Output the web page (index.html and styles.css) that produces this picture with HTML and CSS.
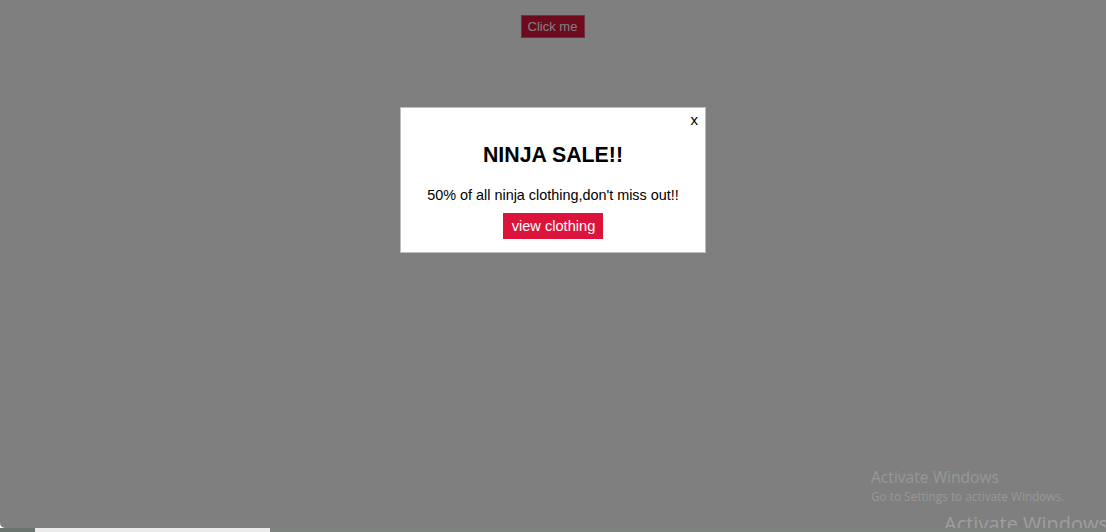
FILE: index.html
```html
<!DOCTYPE html>
<html>
<head>
<meta charset="utf-8">
<link rel="stylesheet" href="styles.css">
</head>
<body>
<div class="app">
  <div class="top">
    <button class="btn-open">Click me</button>
  </div>
  <div class="backdrop">
    <div class="popup">
      <span class="close">x</span>
      <h1 class="title">NINJA SALE!!</h1>
      <p class="text">50% of all ninja clothing,don't miss out!!</p>
      <button class="btn-view">view clothing</button>
    </div>
    <div class="watermark">
      <div class="wm-title">Activate Windows</div>
      <div class="wm-sub">Go to Settings to activate Windows.</div>
    </div>
    <div class="wm-big">Activate Windows</div>
  </div>
  <div class="bottombar">
    <span class="seg seg-a"></span><span class="seg seg-b"></span><span class="seg seg-c"></span>
  </div>
</div>
</body>
</html>
```

FILE: styles.css
```css
html, body {
  margin: 0;
  padding: 0;
  width: 1106px;
  height: 532px;
  overflow: hidden;
  background: #ffffff;
  font-family: "Liberation Sans", Arial, sans-serif;
}
.app {
  position: relative;
  width: 1106px;
  height: 532px;
}
.top {
  display: flex;
  justify-content: center;
  padding-top: 15px;
}
.btn-open {
  font-family: "Liberation Sans", Arial, sans-serif;
  font-size: 13px;
  background: #dc143c;
  color: #ffffff;
  border: 1px solid #e8607a;
  height: 23px;
  width: 64px;
  padding: 0;
  margin-left: -1px;
}
.backdrop {
  position: absolute;
  left: 0;
  top: 0;
  width: 1106px;
  height: 528px;
  background: rgba(0, 0, 0, 0.5);
  border-bottom-left-radius: 5px;
  display: flex;
  flex-direction: column;
  align-items: center;
}
.popup {
  position: relative;
  box-sizing: border-box;
  width: 306px;
  margin-top: 107px;
  height: 146px;
  background: #ffffff;
  border: 1px solid #bdbdbd;
  display: flex;
  flex-direction: column;
  align-items: center;
  padding-top: 35px;
}
.close {
  position: absolute;
  right: 7px;
  top: 3px;
  font-size: 15px;
  color: #000;
}
.title {
  margin: 0;
  font-size: 21.3px;
  font-weight: bold;
  line-height: 24px;
  color: #000;
}
.text {
  margin: 19px 0 0;
  font-size: 14.4px;
  line-height: 18px;
  color: #000;
}
.btn-view {
  margin-top: 9px;
  font-family: "Liberation Sans", Arial, sans-serif;
  font-size: 14.6px;
  background: #dc143c;
  color: #ffffff;
  border: none;
  height: 26px;
  padding: 0 8px 0 9px;
}
.watermark {
  position: absolute;
  left: 871px;
  top: 467px;
  font-family: "Open Sans", "Noto Sans", sans-serif;
  color: rgba(255, 255, 255, 0.2);
}
.wm-title {
  font-size: 15.6px;
  line-height: 20px;
}
.wm-sub {
  font-size: 11.8px;
  line-height: 18px;
}
.wm-big {
  position: absolute;
  left: 944px;
  top: 510px;
  font-family: "Open Sans", "Noto Sans", sans-serif;
  font-size: 20px;
  line-height: 28px;
  color: rgba(255, 255, 255, 0.25);
  white-space: nowrap;
}
.bottombar {
  position: absolute;
  left: 0;
  bottom: 0;
  width: 1106px;
  height: 4px;
  display: flex;
  background: #f2f2f2;
}
.seg { height: 4px; display: block; }
.seg-a { width: 35px; background: #6c7470; }
.seg-b { width: 235px; background: #ebebeb; }
.seg-c { flex: 1; background: #7d8480; }
```
